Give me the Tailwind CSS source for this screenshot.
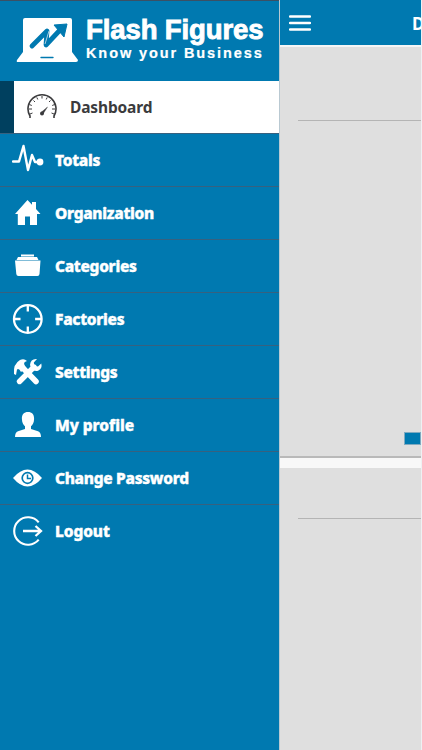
<!DOCTYPE html>
<html lang="en">
<head>
<meta charset="utf-8">
<title>Flash Figures</title>
<script src="https://cdn.jsdelivr.net/npm/@tailwindcss/browser@4"></script>
</head>
<body class="flex h-[750px] w-[422px] overflow-hidden bg-[#dfdfdf] font-['Noto_Sans','Open_Sans',sans-serif]">
<aside class="flex h-full w-[279px] shrink-0 flex-col bg-[#0079b0] text-white">
  <header class="flex h-[81px] shrink-0 border-t border-[#3b5064] pt-[16px] pl-[16px]">
    <svg class="h-[46px] w-[63px] shrink-0" viewBox="0 0 63 46" fill="none">
      <path d="M9 1H54Q56 1 56 3V35L62 43Q62 45 60 45H2Q0 45 1 43L7 35V3Q7 1 9 1Z" fill="#fff"/>
      <path d="M16 29L31 14L30 28L44 13" stroke="#0079b0" stroke-width="4.8" stroke-linecap="round" stroke-linejoin="round"/>
      <path d="M38 8L51 7L48 20Z" fill="#0079b0" stroke="#0079b0" stroke-linejoin="round"/>
      <path d="M33 14L29 27" stroke="#a9cde0" stroke-width="1"/>
      <path d="M25 40.5H37" stroke="#0079b0" stroke-width="1.4" stroke-linecap="round"/>
    </svg>
    <div class="ml-[7px] -mt-px whitespace-nowrap font-['Liberation_Sans',Arial,sans-serif] font-bold">
      <div class="text-[27.5px] leading-[28px] tracking-[-0.1px] [-webkit-text-stroke:0.9px_white]">Flash Figures</div>
      <div class="text-[14.5px] leading-[18px] tracking-[1.9px] [-webkit-text-stroke:0.2px_white]">Know your Business</div>
    </div>
  </header>
  <nav class="whitespace-nowrap text-[15.5px] font-extrabold tracking-[-0.3px] [-webkit-text-stroke:0.4px_currentColor]">
    <a class="flex h-[52px] items-center border-l-[14px] border-l-[#00405f] bg-white pl-[13px] font-bold text-[#3b3b3d] tracking-[-0.15px] [-webkit-text-stroke:0px]">
      <svg class="mr-[13px] h-[30px] w-[30px]" viewBox="0 0 30 30" fill="none" stroke="#3b3b3d">
        <path d="M3 26V24A14 14 0 1 1 27 24V26" stroke-width="1.6"/>
        <path d="M15 4V6.500M6.500 8.500L8 10M23.500 8.500L22 10M2 17H5M28 17H25M9.800 5.400L10.800 7.500M20.200 5.400L19.200 7.500M2.400 12.500L4.800 13.500M27.600 12.500L25.200 13.500M3 22L5.500 21M27 22L24.500 21" stroke-width="1"/>
        <path d="M14 20.500L20.500 15L16 22Z" fill="#3b3b3d" stroke-width=".4"/><circle cx="15" cy="21.500" r="2" fill="#3b3b3d" stroke="none"/>
      </svg><span class="pt-[2px]">Dashboard</span></a>
    <a class="flex h-[53px] items-center border-t border-[#37617f] pl-[12px]">
      <svg class="mr-[11px] h-[32px] w-[32px]" viewBox="0 0 32 32" fill="none" stroke="#fff"><path d="M1 17.500H7L11.500 2L16 26L20 11L23 18H28" stroke-width="2.400" stroke-linejoin="round" stroke-linecap="round"/><circle cx="28" cy="18" r="3.400" fill="#fff" stroke="none"/></svg><span class="pt-[2px]">Totals</span></a>
    <a class="flex h-[53px] items-center border-t border-[#37617f] pl-[12px]">
      <svg class="mr-[11px] h-[32px] w-[32px]" viewBox="0 0 32 32" fill="#fff"><path d="M15.500 3L20 7.700V5H24V12L28.500 17H25V28H18V19.500H13V28H5.800V17H3Z"/></svg><span class="pt-[2px]">Organization</span></a>
    <a class="flex h-[53px] items-center border-t border-[#37617f] pl-[12px]">
      <svg class="mr-[11px] h-[32px] w-[32px]" viewBox="0 0 32 32" fill="#fff"><path d="M9 4.500H22V6.500H9ZM6 7H25L26.500 10H4.500ZM3 10.500H28.500L27.500 24Q27.300 26 25.500 26H6.500Q4.500 26 4.300 24Z"/></svg><span class="pt-[2px]">Categories</span></a>
    <a class="flex h-[53px] items-center border-t border-[#37617f] pl-[12px]">
      <svg class="mr-[11px] h-[32px] w-[32px]" viewBox="0 0 32 32" fill="none" stroke="#fff" stroke-width="2.300"><circle cx="15.800" cy="16" r="13.800"/><path d="M15.800 2V8.500M15.800 23.500V30M2 16H8.500M23.100 16H29.600"/></svg><span class="pt-[2px]">Factories</span></a>
    <a class="flex h-[53px] items-center border-t border-[#37617f] pl-[12px]">
      <svg class="mr-[11px] h-[32px] w-[32px]" viewBox="0 0 32 32" fill="none" stroke="#fff"><path d="M11 12L24 25.500" stroke-width="5.600" stroke-linecap="round"/><path d="M22 11L7.500 25.500" stroke-width="5.400" stroke-linecap="round"/><path d="M2 18Q1 8 8 4Q12 2 15 5Q11 6 12.500 9L14 12L9 16Q7 12 5 13.500L4 19Z" fill="#fff" stroke="none"/><path d="M25 3L21.800 6.500L22.500 10L26 10.500L29.300 7.500Q30.500 12.500 26.500 14.500Q23 16 19.500 13L18 9Q18.500 2.500 25 3Z" fill="#fff" stroke="none"/></svg><span class="pt-[2px]">Settings</span></a>
    <a class="flex h-[53px] items-center border-t border-[#37617f] pl-[12px]">
      <svg class="mr-[11px] h-[32px] w-[32px]" viewBox="0 0 32 32" fill="#fff"><path d="M16 3C20 3 22.300 5.500 22.100 10C22 14 20.300 16 19 17.300V20L26 22.300Q29 23.500 29 28H3Q3 23.500 6 22.300L13 20V17.300C11.700 16 10 14 9.900 10C9.700 5.500 12 3 16 3Z"/></svg><span class="pt-[2px] tracking-[-0.05px]">My profile</span></a>
    <a class="flex h-[53px] items-center border-t border-[#37617f] pl-[12px]">
      <svg class="mr-[11px] h-[32px] w-[32px]" viewBox="0 0 32 32" fill="#fff"><path d="M1 16Q15.500 -1 30 16Q15.500 33 1 16Z"/><circle cx="15.500" cy="16" r="5.300" fill="none" stroke="#0079b0" stroke-width="1.700"/><path d="M15.500 12.500V16.500H19" fill="none" stroke="#0079b0" stroke-width="1.500"/></svg><span class="pt-[2px]">Change Password</span></a>
    <a class="flex h-[53px] items-center border-t border-[#37617f] pl-[12px]">
      <svg class="mr-[11px] h-[32px] w-[32px]" viewBox="0 0 32 32" fill="none" stroke="#fff" stroke-width="2.100"><path d="M26.700 7.300A13.800 13.800 0 1 0 26.700 24.700"/><path d="M11 16H29M23.500 11L29 16L23.500 21" stroke-width="2.300"/></svg><span class="pt-[2px] tracking-[-0.1px]">Logout</span></a>
  </nav>
</aside>
<main class="flex h-full w-[143px] shrink-0 flex-col border-l border-[#b9c9d2] border-r border-r-[#eef1f3] bg-[#dfdfdf]">
  <header class="flex h-[45px] shrink-0 items-center overflow-hidden bg-[#0079b0] pl-[9px] text-white">
    <svg class="h-[16px] w-[22px] shrink-0" viewBox="0 0 22 16" fill="none" stroke="#fff" stroke-width="2.400" stroke-linecap="round"><path d="M1 1.500H21M1 8H21M1 14.500H21"/></svg>
    <span class="ml-[101px] pt-[2px] text-[17px] font-bold">Dashboard</span>
  </header>
  <section class="flex h-[413px] shrink-0 flex-col justify-between border-t-2 border-b-2 border-t-[#f4f5f6] border-b-[#b9b9b9] pb-[11px]">
    <div class="ml-[18px] mt-[73px] h-px shrink-0 bg-[#b4b4b4]"></div>
    <div class="h-[13px] w-[17px] self-end border border-[#80aac0] bg-[#0079b0]"></div>
  </section>
  <div class="h-[10px] shrink-0 bg-[#f8f8f8]"></div>
  <section class="grow pt-[50px] pl-[18px]"><div class="h-px bg-[#b4b4b4]"></div></section>
</main>
</body>
</html>
